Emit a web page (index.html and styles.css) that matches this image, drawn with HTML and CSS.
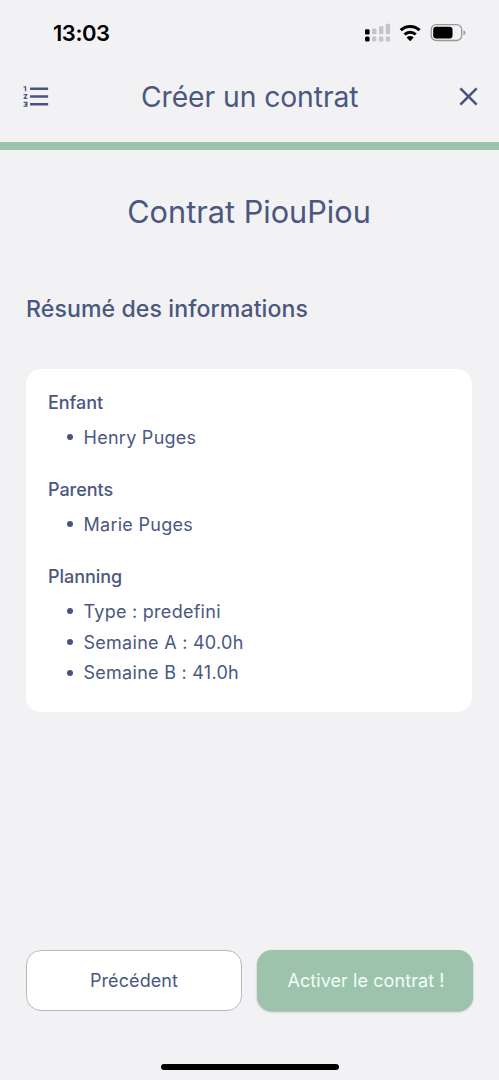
FILE: index.html
```html
<!DOCTYPE html>
<html lang="fr">
<head>
<meta charset="utf-8">
<title>Créer un contrat</title>
<link rel="stylesheet" href="styles.css">
</head>
<body>
<div class="screen">
  <div class="status">
    <span class="time">13:03</span>
    <svg class="status-icons" width="104" height="24" viewBox="0 0 104 24">
      <g fill="#c5c5c7">
        <rect x="8" y="7.5" width="4.4" height="5.8" rx="1"/>
        <rect x="15" y="5.2" width="4.4" height="8.1" rx="1"/>
        <rect x="21.7" y="2.7" width="4.4" height="10.6" rx="1"/>
        <rect x="8" y="15.6" width="4.4" height="4.9" rx="1.3"/>
        <rect x="15" y="15.6" width="4.4" height="4.9" rx="1.3"/>
        <rect x="21.7" y="15.6" width="4.4" height="4.9" rx="1.3"/>
      </g>
      <rect x="1" y="8.2" width="4.6" height="5.4" rx="1.3"/>
      <rect x="1" y="15.4" width="4.6" height="5.2" rx="1.5"/>
      <g fill="none" stroke="#000" stroke-width="3">
        <path d="M36.7 9.2a13.6 13.6 0 0 1 18.9 0"/>
        <path d="M40.6 13.5a8 8 0 0 1 11.1 0"/>
      </g>
      <path d="M42.6 16.5a5 5 0 0 1 7.1 0L46.15 20.2z"/>
      <rect x="67.2" y="3.7" width="30.5" height="15.8" rx="5" fill="none" stroke="#98989b" stroke-width="1.3"/>
      <rect x="69.2" y="5.7" width="19.3" height="11.8" rx="3"/>
      <path d="M99.5 9.3q2 .8 2 2.5t-2 2.5z" fill="#98989b"/>
    </svg>
  </div>
  <header class="bar">
    <svg class="icon" viewBox="0 0 24 24"><path d="M2 17h2v.5H3v1h1v.5H2v1h3v-4H2v1zm1-9h1V4H2v1h1v3zm-1 3h1.8L2 13.1v.9h3v-1H3.2L5 10.9V10H2v1zm5-6v2h14V5H7zm0 14h14v-2H7v2zm0-6h14v-2H7v2z"/></svg>
    <h1 class="bar-title">Créer un contrat</h1>
    <svg class="icon" viewBox="0 0 24 24"><path d="M19 6.41 17.59 5 12 10.59 6.41 5 5 6.41 10.59 12 5 17.59 6.41 19 12 13.41 17.59 19 19 17.59 13.41 12z"/></svg>
  </header>
  <div class="progress"></div>
  <main class="content">
    <h2 class="contract">Contrat PiouPiou</h2>
    <h3 class="summary">Résumé des informations</h3>
    <div class="card">
      <section class="group">
        <h4 class="label">Enfant</h4>
        <ul class="list"><li class="item">Henry Puges</li></ul>
      </section>
      <section class="group">
        <h4 class="label">Parents</h4>
        <ul class="list"><li class="item">Marie Puges</li></ul>
      </section>
      <section class="group">
        <h4 class="label">Planning</h4>
        <ul class="list">
          <li class="item">Type : predefini</li>
          <li class="item">Semaine A : 40.0h</li>
          <li class="item">Semaine B : 41.0h</li>
        </ul>
      </section>
    </div>
  </main>
  <footer class="actions">
    <button class="btn btn-back">Précédent</button>
    <button class="btn btn-go">Activer le contrat !</button>
  </footer>
  <div class="home"></div>
</div>
</body>
</html>
```
FILE: styles.css
```css
* { box-sizing: border-box; margin: 0; padding: 0; }
body { background: #f2f2f4; color: #4b577f; font-family: Inter, "Liberation Sans", sans-serif; }
.screen { width: 499px; height: 1080px; display: flex; flex-direction: column; overflow: hidden; }
.status { height: 66px; padding: 0 31px 0 53px; display: flex; justify-content: space-between; align-items: center; color: #000; }
.time { font-size: 22px; font-weight: 600; line-height: 28px; letter-spacing: -.45px; }
.status-icons { display: block; }
.bar { height: 76px; padding: 0 15px 16px 20.5px; display: flex; align-items: center; justify-content: space-between; }
.icon { width: 31px; height: 31px; fill: #48547f; }
.bar-title { margin-right: 5px; padding-top: 1px; font-size: 28.3px; line-height: 36px; font-weight: 400; letter-spacing: -.08px; }
.progress { height: 8px; background: #9dc3ad; }
.content { flex: 1; padding: 42px 27px 0 26px; }
.contract { font-size: 30.7px; line-height: 40px; font-weight: 400; text-align: center; }
.summary { margin-top: 59px; font-size: 23.1px; line-height: 36px; font-weight: 500; letter-spacing: .1px; }
.card { margin-top: 42px; height: 343px; padding: 21px 22px; background: #fff; border-radius: 15px; display: flex; flex-direction: column; gap: 25px; }
.label { padding-top: 1px; font-size: 18px; line-height: 24px; font-weight: 500; letter-spacing: -.05px; }
.list { list-style: none; padding: 7px 0 0 19px; }
.group { height: 62px; }
.item { height: 30.8px; display: flex; align-items: center; gap: 10.5px; font-size: 18px; letter-spacing: .27px; }
.item::before { content: ""; width: 6px; height: 6px; border-radius: 50%; background: #48547f; }
.actions { height: 61px; padding: 0 26px; display: grid; grid-template-columns: 1fr 1fr; gap: 15px; }
.btn { font: 400 18px Inter, "Liberation Sans", sans-serif; letter-spacing: .08px; border-radius: 15px; border: 0; }
.btn-back { background: #fff; color: #4b577f; border: 1px solid #b9b9bd; }
.btn-go { padding-left: 2px; background: #9dc3ad; color: #f0fff5; box-shadow: 0 1px 2px rgba(0,0,0,.3); }
.home { width: 178px; height: 6px; margin: 53px auto 10px; border-radius: 3px; background: #000; }
```
